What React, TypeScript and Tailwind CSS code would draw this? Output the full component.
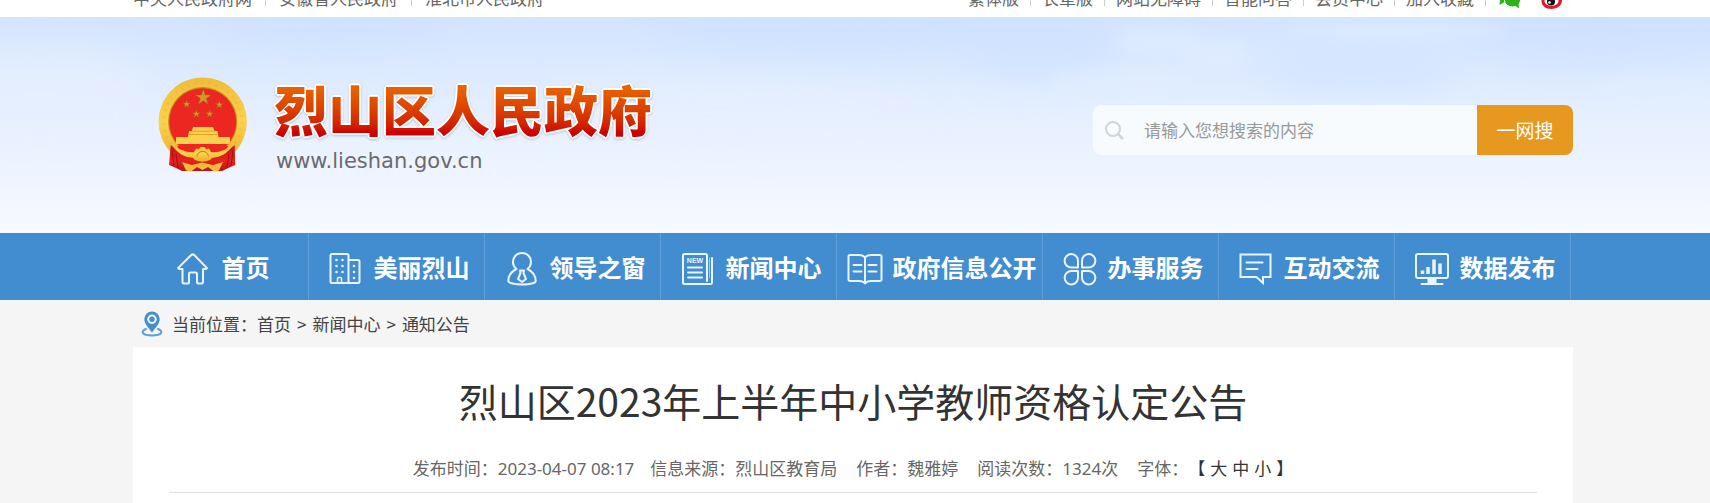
import type { ReactNode } from "react";

const portalLinks = ["中央人民政府网", "安徽省人民政府", "淮北市人民政府"];
const toolLinks = ["繁体版", "长辈版", "网站无障碍", "智能问答", "会员中心", "加入收藏"];

function starPoints(cx: number, cy: number, r: number) {
  return Array.from({ length: 10 }, (_, i) => {
    const radius = i % 2 === 0 ? r : r * 0.38;
    const angle = (Math.PI / 5) * i - Math.PI / 2;
    return `${(cx + radius * Math.cos(angle)).toFixed(2)},${(cy + radius * Math.sin(angle)).toFixed(2)}`;
  }).join(" ");
}

function Emblem() {
  return (
    <svg className="mt-[7px]" width="90" height="96" viewBox="0 0 90 96" aria-hidden="true">
      <defs>
        <linearGradient id="gold" x1="0" y1="0" x2="0" y2="1">
          <stop offset="0" stopColor="#eebd3a" />
          <stop offset="0.5" stopColor="#fbd24c" />
          <stop offset="1" stopColor="#e9ab2c" />
        </linearGradient>
        <linearGradient id="cloth" x1="0" y1="0" x2="0" y2="1">
          <stop offset="0" stopColor="#c5161a" />
          <stop offset="0.6" stopColor="#e8221f" />
          <stop offset="1" stopColor="#b81216" />
        </linearGradient>
      </defs>
      <circle cx="44.7" cy="44.7" r="44.2" fill="url(#gold)" />
      <circle cx="44.7" cy="44.7" r="39" fill="none" stroke="#d49a26" strokeWidth="3" strokeDasharray="2 5" opacity="0.2" />
      <circle cx="44.7" cy="44.7" r="34.6" fill="#c98a1c" />
      <circle cx="44.7" cy="44.7" r="33.5" fill="#ec2722" />
      <g fill="#d9952a" stroke="#9c5c14" strokeWidth="0.5">
        <polygon points={starPoints(45.3, 20.5, 8.4)} />
        <polygon points={starPoints(28.7, 27.2, 4.2)} />
        <polygon points={starPoints(61.3, 27.8, 4.2)} />
        <polygon points={starPoints(38.3, 37, 4.2)} />
        <polygon points={starPoints(51.7, 37, 4.2)} />
      </g>
      <path d="M35 50h20l1.500 4h3l1 6H72v7H18v-7h12l1-6h3z" fill="#fcd04a" />
      <path d="M32.500 54.200h25M30.500 57.500h29" stroke="#d9952a" strokeWidth="0.8" />
      {/* red drapery on both sides, gold cog and ears between them */}
      <path d="M12.700 68l10 8 12 5h20l12-5 10-8 .5 20c-5 2-9 4-13 6H24c-4-2-8-4-13-6z" fill="url(#cloth)" />
      <path d="M19 69h51.500c-4 6-9 9-15 11H34c-7-2-12-5-15-11z" fill="#ec2722" />
      <path d="M14 68c8 5 16 8 22 7l2-3.500 3 .5 1.500-2h4l1.500 2 3-.5 2 3.500c7 1 15-2 22-7-5 8-13 13-21 12.500C52.500 86 36.500 86 35 80.500 27 81 19 76 14 68z" fill="url(#gold)" />
      <path d="M39 79.500a5.800 5.800 0 0 1 11.500 0" fill="none" stroke="#c47d18" strokeWidth="1" />
      <path d="M24 85l10 3 10-2.500 11 2.500 10-3-4 8.500-5 1-6-4.500-5.500 3-5.500-3-6 4.500-5-1z" fill="#f4bb38" />
      <path d="M14 74l2 15M18 77l2 14M75 74l-2 15M71 77l-2 14" stroke="#a30e12" strokeWidth="1" />
    </svg>
  );
}

function Sky() {
  return (
    <svg
      className="absolute inset-0 h-full w-full"
      viewBox="0 0 1710 216"
      preserveAspectRatio="none"
      aria-hidden="true"
    >
      <defs>
        <filter id="soft" x="-20%" y="-50%" width="140%" height="200%">
          <feGaussianBlur stdDeviation="16" />
        </filter>
        <filter id="puff" x="-20%" y="-50%" width="140%" height="200%">
          <feGaussianBlur stdDeviation="6" />
        </filter>
      </defs>
      <g filter="url(#soft)" fill="#c6deff" opacity="0.4">
        <ellipse cx="330" cy="10" rx="120" ry="22" />
        <ellipse cx="850" cy="10" rx="200" ry="30" />
        <ellipse cx="1040" cy="30" rx="80" ry="36" />
        <ellipse cx="1360" cy="55" rx="100" ry="22" />
        <ellipse cx="1600" cy="10" rx="140" ry="42" />
      </g>
      <g filter="url(#soft)" fill="#e8f1ff" opacity="0.5">
        <ellipse cx="40" cy="70" rx="110" ry="40" />
        <ellipse cx="720" cy="95" rx="200" ry="30" />
      </g>
      <g filter="url(#puff)" fill="#e2eeff" opacity="0.5">
        <ellipse cx="1160" cy="24" rx="44" ry="14" />
        <ellipse cx="1215" cy="38" rx="34" ry="16" />
        <ellipse cx="1120" cy="64" rx="70" ry="14" />
        <ellipse cx="1010" cy="78" rx="70" ry="10" />
        <ellipse cx="1400" cy="14" rx="110" ry="8" />
        <ellipse cx="1650" cy="74" rx="60" ry="20" />
      </g>
    </svg>
  );
}

function NavIcon({ children }: { children: ReactNode }) {
  return (
    <svg
      className="mt-0.5 shrink-0"
      width="36"
      height="36"
      viewBox="0 0 36 36"
      fill="none"
      stroke="#eaf4fd"
      strokeWidth="2"
      strokeLinecap="round"
      strokeLinejoin="round"
      aria-hidden="true"
    >
      {children}
    </svg>
  );
}

const navItems: { label: string; wide?: boolean; icon: ReactNode }[] = [
  {
    label: "首页",
    icon: <path d="M6.500 19H3a.8.8 0 0 1-.5-1.400L15 5.200a2.500 2.500 0 0 1 3.500 0L30.500 17.600a.8.8 0 0 1-.5 1.400h-3v13a1.500 1.500 0 0 1-1.500 1.500H22a1 1 0 0 1-1-1V24a1.500 1.500 0 0 0-1.500-1.500h-5A1.500 1.500 0 0 0 13 24v8.500a1 1 0 0 1-1 1H8A1.500 1.500 0 0 1 6.500 32z" />,
  },
  {
    label: "美丽烈山",
    icon: (
      <>
        <path d="M20.500 33H4a1.500 1.500 0 0 1-1.500-1.500v-26A1.500 1.500 0 0 1 4 4h15a1.500 1.500 0 0 1 1.500 1.500zM20.500 10H30a1.500 1.500 0 0 1 1.500 1.500V31.500A1.500 1.500 0 0 1 30 33h-9.500" />
        <path d="M9.500 33v-4.500a1 1 0 0 1 1-1h2a1 1 0 0 1 1 1V33" strokeWidth="1.500" />
        <path d="M8.500 10h.01M14.500 10h.01M8.500 16h.01M14.500 16h.01M8.500 22h.01M14.500 22h.01M26 16h.01M26 22h.01M26 28h.01" strokeWidth="2.600" />
      </>
    ),
  },
  {
    label: "领导之窗",
    icon: (
      <>
        <path d="M12.500 19a9 9 0 1 1 11 0c5 2.500 8.200 7 8.200 12 0 4.600-27.400 4.600-27.400 0 0-5 3.200-9.500 8.200-12z" />
        <path d="M16 20.500h4l-.5 2.500 2.500 6-4 3-4-3 2.500-6z" />
      </>
    ),
  },
  {
    label: "新闻中心",
    icon: (
      <>
        <path d="M27 31V5.500A1.500 1.500 0 0 0 25.500 4h-21A1.500 1.500 0 0 0 3 5.500v27A1.500 1.500 0 0 0 4.500 34h26a1.500 1.500 0 0 0 1.500-1.500V8" />
        <path d="M8 17.500h14M8 22.500h14M8 27.500h14" />
        <path d="M29.500 8v20" strokeWidth="1" opacity="0.6" />
        <text
          x="15"
          y="13"
          textAnchor="middle"
          className="font-['Liberation_Sans'] text-[7px]"
          fill="#eaf4fd"
          stroke="none"
        >
          NEW
        </text>
      </>
    ),
  },
  {
    label: "政府信息公开",
    wide: true,
    icon: (
      <>
        <path d="M18 7.500C16.500 5.500 14.500 5 12 5H3a1.500 1.500 0 0 0-1.500 1.500v23A1.500 1.500 0 0 0 3 31h9c2.500 0 4.500.5 6 2.500 1.500-2 3.500-2.500 6-2.500h9a1.500 1.500 0 0 0 1.500-1.500v-23A1.500 1.500 0 0 0 33 5h-9c-2.500 0-4.500.5-6 2.500zM18 7.500v25" />
        <path d="M6.500 15h8M6.500 21.500h8M21.500 15h8M21.500 21.500h8" />
      </>
    ),
  },
  {
    label: "办事服务",
    icon: <path d="M16 17.500v-6.500A6.700 6.700 0 1 0 9.300 17.500zM20 17.500v-6.500a6.700 6.700 0 1 1 6.700 6.500zM16 21v6a6.700 6.700 0 1 1-6.700-6zM20 21v6a6.700 6.700 0 1 0 6.700-6z" />,
  },
  {
    label: "互动交流",
    icon: (
      <>
        <path d="M2.500 4.500h30v22.500h-7.500v6l-6.500-6h-16z" strokeLinejoin="miter" />
        <path d="M8.500 12.500h16M8.500 19h11" />
      </>
    ),
  },
  {
    label: "数据发布",
    icon: (
      <>
        <rect x="2" y="4" width="32" height="24" rx="2" />
        <path d="M13.500 28h9v5h-9z" fill="#eaf4fd" stroke="none" />
        <path d="M7.500 34h21" />
        <path d="M8.500 24v-3.500M14 24v-7M20 24V9.500M26 24V13.500" strokeWidth="3.500" strokeLinecap="butt" />
      </>
    ),
  },
];

function WechatIcon() {
  return (
    <svg width="24" height="22" viewBox="0 0 24 22" aria-hidden="true">
      <ellipse cx="9" cy="8" rx="9" ry="7.500" fill="#2db21a" />
      <path d="M3 13l-.5 5 5-3z" fill="#2db21a" />
      <ellipse cx="15.500" cy="13.500" rx="8" ry="6.500" fill="#2db21a" stroke="#fff" strokeWidth="1" />
      <path d="M18 18.500l4 3-.5-5z" fill="#2db21a" />
      <circle cx="13" cy="12" r="1" fill="#fff" />
      <circle cx="18" cy="12" r="1" fill="#fff" />
    </svg>
  );
}

function WeiboIcon() {
  return (
    <svg width="24" height="22" viewBox="0 0 24 22" aria-hidden="true">
      <path d="M9 5c3-2 5-1 4.500 1.500C17 5.500 19 7 18 9.500c2 .8 3 2.200 3 4 0 4.500-4.500 8.500-10.500 8.500S.500 18.500 .500 14C.500 11 4 7 9 5z" fill="#e6162d" />
      <ellipse cx="10.500" cy="14" rx="7" ry="5" fill="#fff" />
      <circle cx="10" cy="14.500" r="4" fill="#111" />
      <circle cx="8.500" cy="15.500" r="1.300" fill="#fff" />
      <path d="M16 1c4-.5 7 2.500 6.500 6.500" fill="none" stroke="#f39a1e" strokeWidth="2" />
    </svg>
  );
}

function LocationPin() {
  return (
    <svg width="22" height="26" viewBox="0 0 22 26" aria-hidden="true">
      <path d="M5 18c-6 2.500-4 6.500 6 6.500s12-4 6-6.500" fill="none" stroke="#5a9fd8" strokeWidth="2" strokeLinecap="round" />
      <path d="M11 .5a7.700 7.700 0 0 1 7.700 7.700C18.700 13 14 17 11 21.500 8 17 3.300 13 3.300 8.200A7.700 7.700 0 0 1 11 .5z" fill="#458fd0" />
      <circle cx="11" cy="8.200" r="4.700" fill="#f5f5f5" />
      <circle cx="11" cy="8.200" r="2.700" fill="#458fd0" />
    </svg>
  );
}

function SearchBox() {
  return (
    <form className="flex h-[50px] w-[480px] overflow-hidden rounded-lg" onSubmit={(e) => e.preventDefault()}>
      <label htmlFor="keyword" className="flex w-[51px] shrink-0 items-center bg-[#f7fbfe] pl-3" aria-label="搜索">
        <svg width="19" height="19" viewBox="0 0 19 19" fill="none" stroke="#d2d5d6" strokeWidth="2" aria-hidden="true">
          <circle cx="8" cy="8" r="7" />
          <path d="M13 13l5 5" strokeWidth="2.500" />
        </svg>
      </label>
      <input
        id="keyword"
        type="text"
        placeholder="请输入您想搜索的内容"
        className="min-w-0 flex-1 bg-[#f7fbfe] text-[17px] text-gray-700 outline-none placeholder:text-[#999999]"
      />
      <button type="submit" className="w-24 bg-[#e7981f] text-[19px] text-white">
        一网搜
      </button>
    </form>
  );
}

export default function App() {
  return (
    <div className="min-h-screen bg-[#f5f5f5] font-['Noto_Sans_CJK_SC',sans-serif] text-[17px] text-[#444444]">
      {/* Top links, partly scrolled out of view */}
      <div className="flex h-[17px] items-end overflow-hidden bg-white pr-1">
        <div className="mx-auto flex w-full max-w-[1440px] justify-between leading-[38px] text-[#666666]">
          <ul className="flex items-center">
            {portalLinks.map((label, i) => (
              <li key={label} className="flex items-center">
                {i > 0 && <span className="mx-[13px] h-4 w-px bg-[#cccccc]" />}
                <a href="#">{label}</a>
              </li>
            ))}
          </ul>
          <ul className="flex items-center pr-2">
            {toolLinks.map((label) => (
              <li key={label} className="flex items-center">
                <a href="#">{label}</a>
                <span className="mx-[11px] h-4 w-px bg-[#cccccc]" />
              </li>
            ))}
            <li className="mr-5">
              <a href="#" aria-label="微信"><WechatIcon /></a>
            </li>
            <li>
              <a href="#" aria-label="微博"><WeiboIcon /></a>
            </li>
          </ul>
        </div>
      </div>

      <header className="relative bg-linear-to-b from-[#d3e4ff] via-[#e7f0ff] to-[#f7faff] pr-1">
        <Sky />
        <div className="relative mx-auto flex h-[216px] max-w-[1440px] items-start justify-between">
          <a href="#" className="flex items-start pt-[53px] pl-[25px]">
            <Emblem />
            <span className="flex flex-col pl-[26px]">
              <span className="[filter:drop-shadow(1px_1px_0_#fff)_drop-shadow(-1px_-1px_0_#fff)_drop-shadow(1px_-1px_0_#fff)_drop-shadow(-1px_1px_0_#fff)_drop-shadow(0_1px_1px_#b9c4d4)]">
                <span className="block bg-linear-to-b from-[#ea6500] from-20% to-[#cc0000] to-80% bg-clip-text text-[54px] leading-[78px] font-black text-transparent">
                  烈山区人民政府
                </span>
              </span>
              <span className="pl-0.5 font-['DejaVu_Sans',sans-serif] text-[21px] leading-[26px] text-[#6b6b6b]">
                www.lieshan.gov.cn
              </span>
            </span>
          </a>
          <div className="pt-[88px]">
            <SearchBox />
          </div>
        </div>
      </header>

      <nav className="bg-[#428dcf] pr-1">
        <ul className="mx-auto flex max-w-[1440px]">
          {navItems.map((item) => (
            <li key={item.label} className={item.wide ? "w-[206px]" : "w-44"}>
              <a
                href="#"
                className="flex h-[67px] items-center justify-center gap-[10px] border-r border-[#5f9fd7] pl-1 text-2xl font-bold whitespace-nowrap text-white"
              >
                <NavIcon>{item.icon}</NavIcon>
                {item.label}
              </a>
            </li>
          ))}
        </ul>
      </nav>

      <main className="pr-1">
        <div className="mx-auto max-w-[1440px]">
          <div className="flex h-[47px] items-center gap-[9px] pl-2">
            <LocationPin />
            <p className="flex gap-1.5">
              <span>
                当前位置：<a href="#">首页</a>
              </span>
              <span>&gt;</span>
              <a href="#">新闻中心</a>
              <span>&gt;</span>
              <a href="#">通知公告</a>
            </p>
          </div>

          <article className="min-h-[156px] bg-white px-9 pt-6">
            <h1 className="text-center text-[39px] leading-[58px] text-[#333333]">
              烈山区2023年上半年中小学教师资格认定公告
            </h1>
            <div className="mt-4 flex h-12 items-center justify-center border-b border-[#dddddd] font-['Noto_Sans','Noto_Sans_CJK_SC',sans-serif] text-[#666666]">
              <span>发布时间：2023-04-07 08:17</span>
              <span className="ml-4">信息来源：烈山区教育局</span>
              <span className="ml-[19px]">作者：魏雅婷</span>
              <span className="ml-[19px]">阅读次数：1324次</span>
              <span className="ml-[19px]">字体：</span>
              <span className="flex gap-[5px] text-[#333333]">
                【
                <button type="button">大</button>
                <button type="button">中</button>
                <button type="button">小</button>
                】
              </span>
            </div>
          </article>
        </div>
      </main>
    </div>
  );
}
